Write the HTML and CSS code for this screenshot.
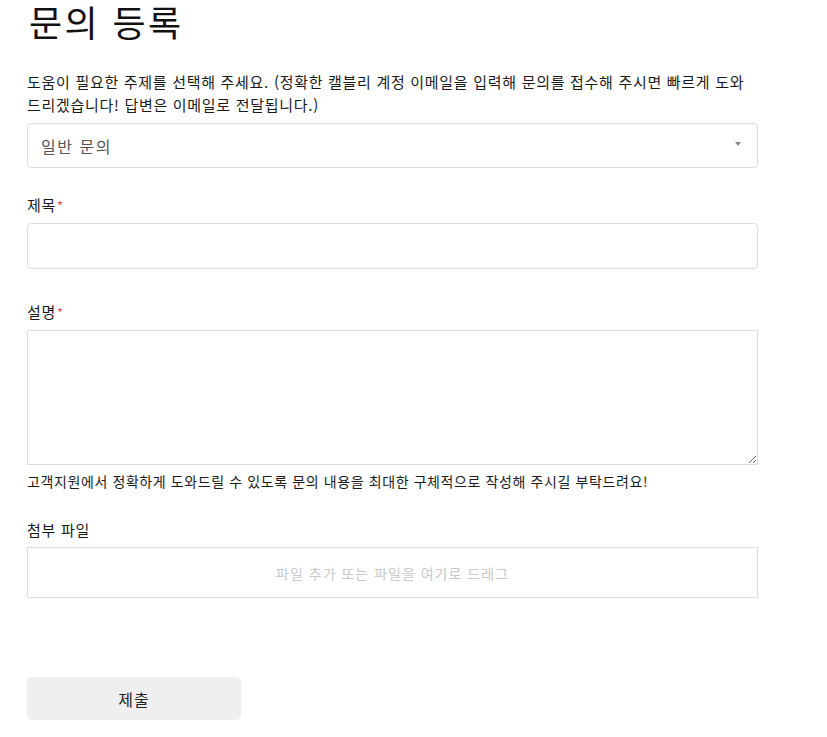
FILE: index.html
```html
<!DOCTYPE html>
<html lang="ko">
<head>
    <meta charset="UTF-8">
    <meta name="viewport" content="width=device-width, initial-scale=1.0">
    <title>문의 등록</title>
    <link rel="stylesheet" href="styles.css">
</head>
<body>
    <div class="request-page">
        <h1 class="page-title">문의 등록</h1>
        <p class="description">
            도움이 필요한 주제를 선택해 주세요. (정확한 캘블리 계정 이메일을 입력해 문의를 접수해 주시면 빠르게 도와<br>
            드리겠습니다! 답변은 이메일로 전달됩니다.)
        </p>

        <div class="select-box">
            <span class="select-value">일반 문의</span>
            <span class="select-arrow"></span>
        </div>

        <div class="form-field field-subject">
            <label class="field-label">제목<span class="required">*</span></label>
            <input type="text" class="text-input">
        </div>

        <div class="form-field field-description">
            <label class="field-label">설명<span class="required">*</span></label>
            <textarea class="text-area"></textarea>
            <p class="hint">고객지원에서 정확하게 도와드릴 수 있도록 문의 내용을 최대한 구체적으로 작성해 주시길 부탁드려요!</p>
        </div>

        <div class="form-field field-attach">
            <label class="field-label">첨부 파일</label>
            <div class="drop-zone">파일 추가 또는 파일을 여기로 드래그</div>
        </div>

        <button class="submit-btn">제출</button>
    </div>
</body>
</html>
```

FILE: styles.css
```css
* {
    margin: 0;
    padding: 0;
    box-sizing: border-box;
}

body {
    font-family: "Noto Sans CJK KR", "Noto Sans", sans-serif;
    color: #222;
    background: #fff;
}

.request-page {
    width: 758px;
    padding-left: 27px;
}

.page-title {
    font-size: 36px;
    font-weight: 400;
    line-height: 42px;
    color: #111;
    padding-left: 2px;
    letter-spacing: 2.4px;
}

.description {
    margin-top: 28px;
    font-size: 15px;
    line-height: 23px;
    color: #1a1a1a;
    letter-spacing: 0.7px;
}

.select-box {
    margin-top: 7px;
    height: 45px;
    border: 1px solid #ddd;
    border-radius: 4px;
    display: flex;
    align-items: center;
    justify-content: space-between;
    padding: 0 16px 0 13px;
}

.select-value {
    font-size: 16px;
    color: #555;
    letter-spacing: 1.5px;
}

.select-arrow {
    width: 0;
    height: 0;
    border-left: 3px solid transparent;
    border-right: 3px solid transparent;
    border-top: 4px solid #888;
    margin-bottom: 4px;
}

.form-field {
    display: flex;
    flex-direction: column;
}

.field-subject {
    margin-top: 26px;
}

.field-description {
    margin-top: 32px;
}

.field-attach {
    margin-top: 28px;
}

.field-label {
    font-size: 15px;
    line-height: 22px;
    color: #1a1a1a;
    margin-bottom: 6px;
    letter-spacing: 0.7px;
}

.required {
    color: #e8505b;
    font-size: 13px;
    margin-left: 1px;
}

.text-input {
    height: 46px;
    border: 1px solid #ddd;
    border-radius: 4px;
    outline: none;
}

.text-area {
    height: 135px;
    border: 1px solid #ddd;
    border-radius: 0;
    outline: none;
    resize: vertical;
    display: block;
}

.hint {
    margin-top: 6px;
    font-size: 14px;
    line-height: 20px;
    color: #1a1a1a;
    letter-spacing: 0.6px;
}

.drop-zone {
    height: 51px;
    border: 1px solid #ddd;
    display: flex;
    align-items: center;
    justify-content: center;
    font-size: 14px;
    color: #c8c8c8;
    letter-spacing: 1px;
}

.submit-btn {
    margin-top: 79px;
    width: 214px;
    height: 43px;
    border: none;
    border-radius: 5px;
    background: #efefef;
    font-family: inherit;
    font-size: 16px;
    color: #222;
    letter-spacing: 1px;
    cursor: pointer;
}
```
